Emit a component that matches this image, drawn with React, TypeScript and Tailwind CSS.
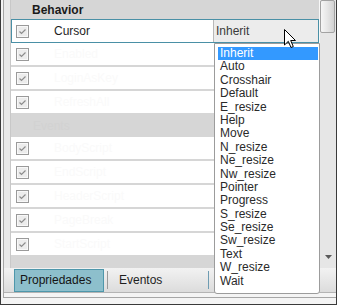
import React from "react";

const items = [
  "Inherit","Auto","Crosshair","Default","E_resize","Help","Move","N_resize","Ne_resize","Nw_resize","Pointer","Progress","S_resize","Se_resize","Sw_resize","Text","W_resize","Wait",
];

function Check() {
  return (
    <span className="flex w-[13px] h-[13px] shrink-0 items-center justify-center border border-[#9a9a9a] bg-[#ececec] shadow-[inset_0_0_0_1px_#f8f8f8]">
      <svg width="9" height="9" viewBox="0 0 9 9">
        <path d="M1.5 4.5 L3.5 6.5 L7.5 2.5" fill="none" stroke="#8c8c8c" strokeWidth="1.2" />
      </svg>
    </span>
  );
}

function Row({ name }: { name: string }) {
  return (
    <div className="flex h-[24px] shrink-0 items-center border-b-2 border-[#d6d6d6] bg-white">
      <span className="ml-[5px]"><Check /></span>
      <span className="ml-[25px] text-[#fafafa]">{name}</span>
    </div>
  );
}

export default function App() {
  return (
    <div
      className="relative w-[337px] h-[305px] overflow-hidden border-l border-r border-b border-[#3a3a3a] bg-[#f4f4f4] pl-[2px] pb-[6px] text-[12px] text-[#1e1e1e]"
      style={{ fontFamily: '"Liberation Sans", Arial, sans-serif' }}
    >
      <div className="flex h-full flex-col border-l border-b border-[#a6a6a6]">
        <div className="flex h-[268px] shrink-0">
          <div className="w-[7px] shrink-0 border-r border-[#c8c8c8] bg-[#e9e9e9]" />
          <div className="flex w-[308px] shrink-0 flex-col bg-[#d6d6d6]">
            <div className="flex h-[19px] shrink-0 items-center bg-[#d6d6d6] pl-[21px] font-bold text-[#1a1a1a]">Behavior</div>
            <div className="flex h-[24px] shrink-0 items-center border border-[#4a90a6] bg-white">
              <span className="ml-[4px]"><Check /></span>
              <span className="ml-[25px]">Cursor</span>
              <div className="ml-auto flex h-full w-[105px] items-center border-l border-[#b8b8b8] bg-[#ececec] pl-[2px] text-[#3a3a3a]">Inherit</div>
            </div>
            <Row name="Enabled" />
            <Row name="LoginAsKey" />
            <Row name="RefreshAll" />
            <div className="flex h-[22px] shrink-0 items-center bg-[#d6d6d6] pl-[22px] text-[#d2d2d2]">Events</div>
            <Row name="BodyScript" />
            <Row name="EndScript" />
            <Row name="HeaderScript" />
            <Row name="PageBreak" />
            <Row name="StartScript" />
          </div>
          <div className="relative flex w-[17px] shrink-0 flex-col border-l border-[#f8f8f8] bg-[#e6e6e6]">
            <div className="h-[33px] w-[15px] rounded-[2px] border border-[#a2a2a2] bg-gradient-to-r from-[#f6f6f6] via-[#e6e6e6] to-[#d2d2d2]" />
            <div className="flex-1" />
            <div className="flex h-[22px] items-center justify-center">
              <svg width="7" height="4" viewBox="0 0 7 4"><path d="M0 0 H7 L3.5 4 Z" fill="#5a5a5a" /></svg>
            </div>
          </div>
        </div>
        <div className="flex h-[25px] shrink-0 items-center border-b border-[#b4b4b4] bg-gradient-to-b from-[#f2f2f2] to-[#dcdcdc]">
          <div className="ml-[10px] flex h-[23px] w-[90px] items-center border border-[#4e97ab] bg-[#8dbfcc] pl-[5px] text-[#141414]">Propriedades</div>
          <div className="ml-[3px] h-[18px] w-px bg-[#9a9a9a]" />
          <span className="ml-[11px]">Eventos</span>
          <div className="ml-[46px] h-[18px] w-px bg-[#6e9cb2]" />
        </div>
        <div className="flex-1" />
      </div>

      <div className="absolute left-[213px] top-[43px] h-[251px] w-[106px] rounded-b-[3px] border border-[#9c9c9c] bg-white pl-[3px] pr-[1px] pt-[3px]">
        {items.map((it, i) => (
          <div
            key={it}
            className={
              i === 0
                ? "h-[13.4px] bg-[#3399ff] pl-[2px] leading-[13.4px] text-white"
                : "h-[13.4px] pl-[2px] leading-[13.4px] text-[#2a2a2a]"
            }
          >
            {it}
          </div>
        ))}
      </div>

      <svg className="absolute left-[283px] top-[29px]" width="13" height="20" viewBox="0 0 13 20">
        <path d="M0.5 0.5 L0.5 16 L4.3 12.3 L7 18.5 L9.3 17.5 L6.7 11.5 L11.5 11.5 Z" fill="white" stroke="black" strokeWidth="1" strokeLinejoin="round" />
      </svg>
    </div>
  );
}
